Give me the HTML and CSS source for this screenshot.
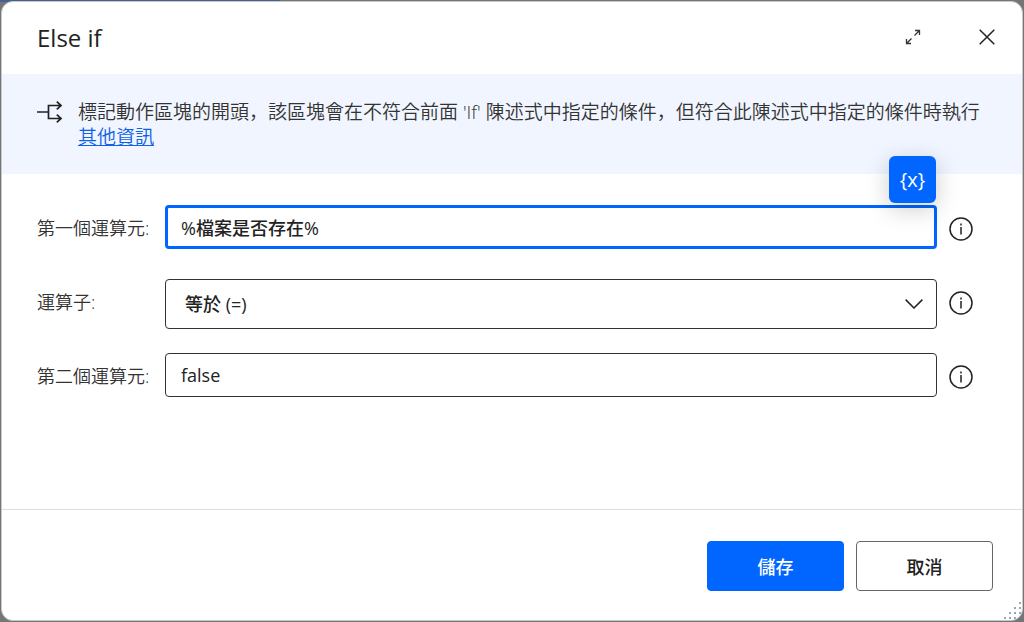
FILE: index.html
```html
<!DOCTYPE html>
<html lang="zh-Hant">
<head>
    <meta charset="UTF-8">
    <meta name="viewport" content="width=device-width, initial-scale=1.0">
    <title>Else if</title>
    <link rel="stylesheet" href="styles.css">
</head>
<body>
    <form class="dialog" role="dialog" aria-labelledby="dialog-title">
        <header class="header">
            <h1 id="dialog-title" class="title">Else if</h1>
            <button type="button" class="icon-button" aria-label="展開">
                <svg width="16" height="16" viewBox="0 0 16 16" fill="none" stroke="#333" stroke-width="1.3">
                    <path d="M9.5 6.5 14.5 1.5M10 1.5h4.5v4.5M6.5 9.5 1.5 14.5M1.5 10v4.5h4.5"/>
                </svg>
            </button>
            <button type="button" class="icon-button" aria-label="關閉">
                <svg width="16" height="16" viewBox="0 0 16 16" fill="none" stroke="#222" stroke-width="1.5">
                    <path d="M.7.7 15.3 15.3M15.3.7.7 15.3"/>
                </svg>
            </button>
        </header>

        <section class="banner">
            <svg class="banner-icon" width="26" height="22" viewBox="0 0 26 22" fill="none" stroke="#222" stroke-width="1.7">
                <path d="M0 11h11.5M24 4.5H11.5v13H24M19.8.7 24 4.5l-4.2 3.8M19.8 13.7 24 17.5l-4.2 3.8"/>
            </svg>
            <div class="banner-text">
                <p>標記動作區塊的開頭，該區塊會在不符合前面 'If' 陳述式中指定的條件，但符合此陳述式中指定的條件時執行</p>
                <a href="#">其他資訊</a>
            </div>
        </section>

        <main class="fields">
            <div class="row">
                <label class="label" for="operand1">第一個運算元:</label>
                <div class="control">
                    <input id="operand1" class="field focused" type="text" value="%檔案是否存在%">
                    <button type="button" class="variable-button" aria-label="選取變數">{x}</button>
                </div>
                <button type="button" class="info" aria-label="資訊">
                    <svg width="24" height="24" viewBox="0 0 24 24" fill="none" stroke="#222" stroke-width="1.5">
                        <circle cx="12" cy="12" r="11"/>
                        <path d="M12 10v7.5M12 6.5v2"/>
                    </svg>
                </button>
            </div>
            <div class="row">
                <label class="label" for="operator">運算子:</label>
                <div class="control">
                    <select id="operator" class="field select">
                        <option>等於 (=)</option>
                    </select>
                    <svg class="chevron" width="18" height="10" viewBox="0 0 18 10" fill="none" stroke="#222" stroke-width="1.5">
                        <path d="M.6.6 9 9 17.4.6"/>
                    </svg>
                </div>
                <button type="button" class="info" aria-label="資訊">
                    <svg width="24" height="24" viewBox="0 0 24 24" fill="none" stroke="#222" stroke-width="1.5">
                        <circle cx="12" cy="12" r="11"/>
                        <path d="M12 10v7.5M12 6.5v2"/>
                    </svg>
                </button>
            </div>
            <div class="row">
                <label class="label" for="operand2">第二個運算元:</label>
                <div class="control">
                    <input id="operand2" class="field" type="text" value="false">
                </div>
                <button type="button" class="info" aria-label="資訊">
                    <svg width="24" height="24" viewBox="0 0 24 24" fill="none" stroke="#222" stroke-width="1.5">
                        <circle cx="12" cy="12" r="11"/>
                        <path d="M12 10v7.5M12 6.5v2"/>
                    </svg>
                </button>
            </div>
        </main>

        <footer class="footer">
            <button type="submit" class="button primary">儲存</button>
            <button type="button" class="button">取消</button>
        </footer>

        <svg class="grip" width="18" height="18" viewBox="0 0 18 18" fill="#9aa5bd">
            <path d="M15 0h2v2h-2zM10 5h2v2h-2zM15 5h2v2h-2zM5 10h2v2H5zM10 10h2v2h-2zM15 10h2v2h-2zM0 15h2v2H0zM5 15h2v2H5zM10 15h2v2h-2z"/>
        </svg>
    </form>
</body>
</html>
```
FILE: styles.css
```css
* {
    box-sizing: border-box;
}
body {
    margin: 0;
    padding: 1px;
    height: 100vh;
    display: flex;
    background: linear-gradient(to right, #45608f 280px, #757575 280px) top / 100% 2px no-repeat #757575;
    font-family: "Open Sans", "Noto Sans CJK JP", sans-serif;
    /* keep the comma in the lower left corner */
    font-feature-settings: "locl" 0;
    font-size: 18px;
    color: #222;
}
button, input, select {
    font: inherit;
    color: inherit;
}
button {
    padding: 0;
    cursor: pointer;
}
.dialog {
    position: relative;
    flex: 1;
    display: flex;
    flex-direction: column;
    background: white;
    border: 1px solid #c8c8c8;
    border-radius: 12px;
    overflow: hidden;
}
.header {
    display: flex;
    align-items: center;
    height: 72px;
    padding: 0 19px 2px 35px;
}
.title {
    flex: 1;
    margin: 0;
    font-size: 24px;
    font-weight: 400;
}
.icon-button {
    display: flex;
    align-items: center;
    justify-content: center;
    width: 32px;
    height: 32px;
    margin-left: 42px;
    border: none;
    background: none;
}
.banner {
    display: flex;
    gap: 15px;
    height: 100px;
    padding: 26px 34px 0 35px;
    background: #f0f5ff;
}
.banner-icon {
    flex: none;
    margin-top: 1px;
}
.banner-text {
    color: #333;
    font-size: 19px;
    font-weight: 350;
    line-height: 25px;
}
.banner-text p {
    margin: 0;
}
.banner-text a {
    color: #0f62e6;
}
.fields {
    flex: 1;
    display: flex;
    flex-direction: column;
    gap: 24px;
    padding: 31px 49px 24px 35px;
}
.row {
    display: flex;
    align-items: flex-start;
    min-height: 50px;
}
.label {
    width: 128px;
    color: #333;
    white-space: nowrap;
    font-weight: 350;
    line-height: 46px;
}
.control {
    position: relative;
    flex: 1;
}
.field {
    display: block;
    width: 100%;
    height: 44px;
    padding: 0 15px;
    border: 1px solid #333;
    border-radius: 4px;
    background: white;
    font-weight: 500;
    outline: none;
}
.focused {
    padding: 0 13px;
    border: 3px solid #0066ff;
}
.select {
    height: 50px;
    padding: 0 19px;
    appearance: none;
}
.chevron {
    position: absolute;
    top: 20px;
    right: 14px;
    pointer-events: none;
}
.variable-button {
    position: absolute;
    right: 1px;
    bottom: 46px;
    width: 47px;
    height: 47px;
    border: none;
    border-radius: 6px;
    background: #0066ff;
    color: white;
    font-size: 20px;
    box-shadow: 0 6px 24px rgba(0, 0, 0, 0.2);
}
.info {
    display: flex;
    align-items: center;
    height: 48px;
    margin-left: 12px;
    border: none;
    background: none;
}
.footer {
    display: flex;
    justify-content: flex-end;
    gap: 12px;
    padding: 31px 29px 29px;
    border-top: 1px solid #ddd;
}
.button {
    width: 137px;
    height: 50px;
    border: 1px solid #666;
    border-radius: 4px;
    background: white;
    font-weight: 500;
}
.primary {
    border-color: #0066ff;
    background: #0066ff;
    color: white;
}
.grip {
    position: absolute;
    right: 0;
    bottom: 0;
}
```
